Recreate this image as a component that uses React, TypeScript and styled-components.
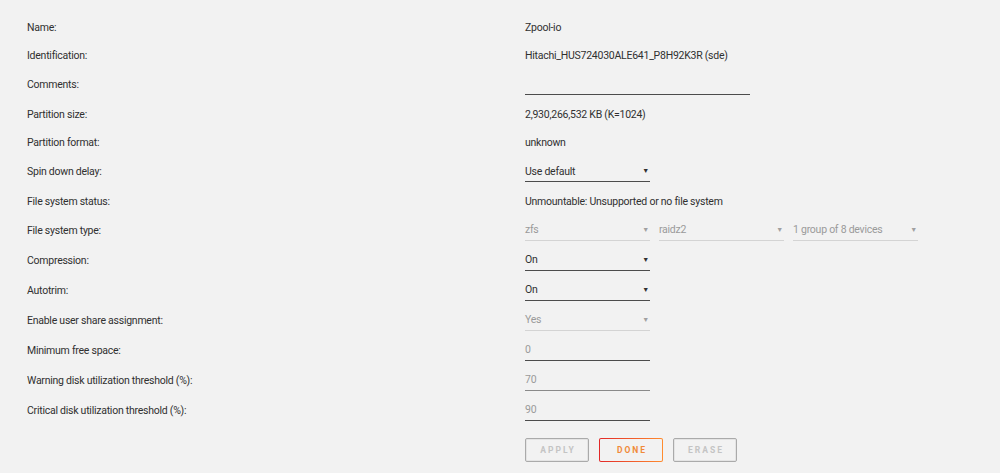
import React from 'react';
import styled, {createGlobalStyle} from 'styled-components';

const GlobalStyle = createGlobalStyle`
  html, body {
    margin: 0;
    padding: 0;
    background: #f2f2f2;
  }
  body {
    font-family: Roboto, "Liberation Sans", Arial, sans-serif;
    font-size: 10.5px;
    letter-spacing: -0.25px;
    color: #303030;
  }
`;

const Page = styled.div`
  padding: 12.75px 0 0 27px;
`;

const Row = styled.div<{ $control?: boolean }>`
  display: flex;
  align-items: center;
  height: ${p => p.$control ? 30 : 28.5}px;
`;

const Label = styled.div`
  width: 498px;
  flex-shrink: 0;
`;

const Value = styled.div`
  display: flex;
  align-items: center;
  gap: 9px;
`;

const Select = styled.div<{ $disabled?: boolean }>`
  box-sizing: border-box;
  width: 125px;
  height: 21px;
  display: flex;
  align-items: center;
  justify-content: space-between;
  padding-right: 1px;
  border-bottom: 1px solid ${p => p.$disabled ? '#d4d4d4' : '#4c4c4c'};
  color: ${p => p.$disabled ? '#9a9a9a' : '#303030'};
`;

const Arrow = styled.span<{ $disabled?: boolean }>`
  font-size: 7px;
  color: ${p => p.$disabled ? '#a0a0a0' : '#303030'};
`;

const Input = styled.div<{ $width?: number; $line?: string }>`
  box-sizing: border-box;
  width: ${p => p.$width ?? 125}px;
  height: 21px;
  display: flex;
  align-items: center;
  border-bottom: 1px solid ${p => p.$line ?? '#4c4c4c'};
  color: #9a9a9a;
`;

const Buttons = styled.div`
  display: flex;
  gap: 10px;
  margin: 13px 0 0 498px;
`;

const Button = styled.div<{ $primary?: boolean }>`
  box-sizing: border-box;
  width: 64px;
  height: 24px;
  display: flex;
  align-items: center;
  justify-content: center;
  border-radius: 2px;
  font-size: 8.5px;
  font-weight: 700;
  letter-spacing: 2px;
  padding-left: 2px;
  border: 1px solid ${p => p.$primary ? 'transparent' : '#aaaaaa'};
  color: ${p => p.$primary ? '#f08a3a' : '#c4c4c4'};
  background: ${p => p.$primary
    ? 'linear-gradient(#f2f2f2, #f2f2f2) padding-box, linear-gradient(90deg, #e22828, #ff8c2f) border-box'
    : '#f2f2f2'};
  box-shadow: ${p => p.$primary ? 'none' : 'inset 0 0 0 1px #e4e4e4'};

  & + & {
    margin-left: ${p => p.$primary ? 0 : 2}px;
  }
`;

const Dropdown = ({value, disabled}: { value: string; disabled?: boolean }) =>
  <Select $disabled={disabled}>
    <span>{value}</span>
    <Arrow $disabled={disabled}>▼</Arrow>
  </Select>;

const Field = ({label, control, children}: { label: string; control?: boolean; children?: React.ReactNode }) =>
  <Row $control={control}>
    <Label>{label}</Label>
    <Value>{children}</Value>
  </Row>;

export default function App() {
  return <>
    <GlobalStyle/>
    <Page>
      <Field label="Name:">Zpool-io</Field>
      <Field label="Identification:">Hitachi_HUS724030ALE641_P8H92K3R (sde)</Field>
      <Field label="Comments:" control><Input $width={225}/></Field>
      <Field label="Partition size:">2,930,266,532 KB (K=1024)</Field>
      <Field label="Partition format:">unknown</Field>
      <Field label="Spin down delay:" control><Dropdown value="Use default"/></Field>
      <Field label="File system status:">Unmountable: Unsupported or no file system</Field>
      <Field label="File system type:" control>
        <Dropdown value="zfs" disabled/>
        <Dropdown value="raidz2" disabled/>
        <Dropdown value="1 group of 8 devices" disabled/>
      </Field>
      <Field label="Compression:" control><Dropdown value="On"/></Field>
      <Field label="Autotrim:" control><Dropdown value="On"/></Field>
      <Field label="Enable user share assignment:" control><Dropdown value="Yes" disabled/></Field>
      <Field label="Minimum free space:" control><Input>0</Input></Field>
      <Field label="Warning disk utilization threshold (%):" control><Input $line="#8a8a8a">70</Input></Field>
      <Field label="Critical disk utilization threshold (%):" control><Input>90</Input></Field>
      <Buttons>
        <Button>APPLY</Button>
        <Button $primary>DONE</Button>
        <Button>ERASE</Button>
      </Buttons>
    </Page>
  </>;
}
